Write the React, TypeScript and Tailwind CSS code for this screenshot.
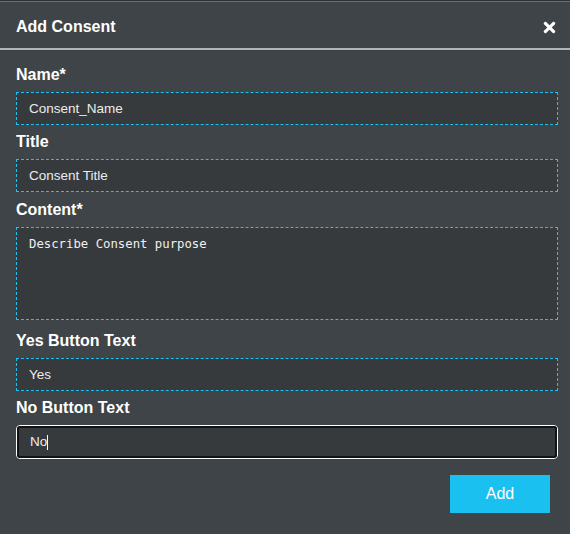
import React from 'react';
import { FaTimes } from 'react-icons/fa';

const labelCls = 'block text-base leading-[20px] font-bold text-white';
const inputCls =
  'block w-full h-[33px] bg-[#363a3d] border border-dashed border-[#1ec2f0] px-3 text-[13.5px] text-[#ececec] outline-none';

export default function App() {
  return (
    <div className="w-[570px] h-[534px] bg-[#3e4447] font-['Liberation_Sans',Arial,sans-serif]">
      <div className="h-px bg-[#2c3033]" />
      <div className="h-px bg-[#6a6e71]" />
      <div className="h-[46px] flex items-center justify-between pl-4 pr-[12px] pt-1">
        <h1 className="text-base font-bold text-white">Add Consent</h1>
        <FaTimes className="text-white w-[17px] h-[17px]" />
      </div>
      <div className="h-[2px] bg-[#b4b4b4]" />

      <div className="pl-4 pr-3 pt-[15px]">
        <label className={`${labelCls} mb-[7px]`}>Name*</label>
        <input className={inputCls} defaultValue="Consent_Name" readOnly />

        <label className={`${labelCls} mt-[7px] mb-[7px]`}>Title</label>
        <input className={inputCls} defaultValue="Consent Title" readOnly />

        <label className={`${labelCls} mt-[8px] mb-[7px]`}>Content*</label>
        <textarea
          className="block w-full h-[93px] resize-none bg-[#363a3d] border border-dashed border-[#1ec2f0] px-3 pt-[9px] text-[12.3px] leading-[15px] text-[#f0f0f0] outline-none font-['DejaVu_Sans_Mono',monospace]"
          defaultValue="Describe Consent purpose"
          readOnly
        />

        <label className={`${labelCls} mt-[11px] mb-[7px]`}>Yes Button Text</label>
        <input className={inputCls} defaultValue="Yes" readOnly />

        <label className={`${labelCls} mt-[7px] mb-[7px]`}>No Button Text</label>
        <div className="border border-white rounded-[4px]">
          <div className="h-[32px] flex items-center bg-[#363a3d] border-2 border-[#111314] rounded-[3px] px-[11px] text-[13.5px] text-[#ececec]">
            <span>No</span>
            <span className="w-px h-[15px] bg-white" />
          </div>
        </div>

        <div className="flex justify-end mt-4 pr-[8px]">
          <button className="w-[100px] h-[38px] bg-[#1ac1f0] text-white text-base">Add</button>
        </div>
      </div>
    </div>
  );
}
